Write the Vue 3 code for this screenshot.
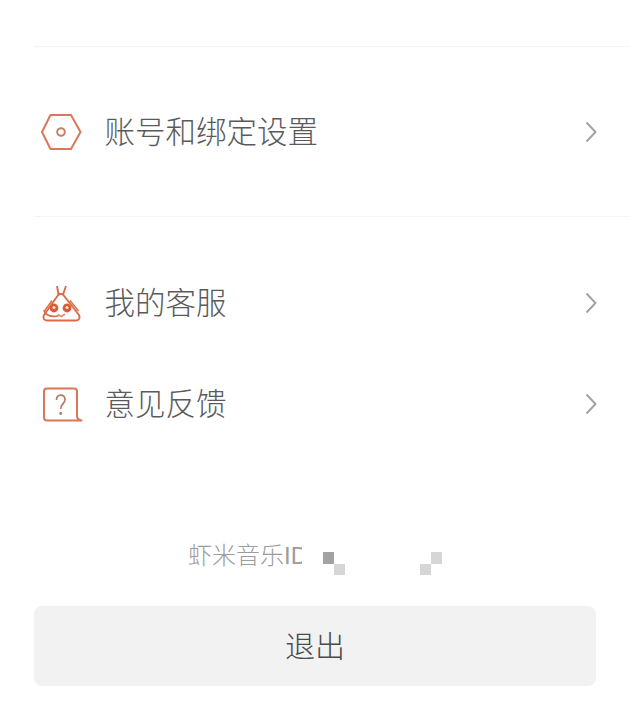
<script setup>
const accountRow = { label: '账号和绑定设置' }
const serviceRows = [
  { key: 'service', label: '我的客服' },
  { key: 'feedback', label: '意见反馈' },
]
</script>

<template>
  <div class="page">
    <div class="divider"></div>

    <section class="group group-account">
      <div class="row">
        <span class="icon">
          <svg width="44" height="38" viewBox="0 0 44 38" fill="none" stroke="#d9775a" stroke-width="2">
            <path d="M11.5 2H32L41.5 19L32 36H11.5L3 19Z" stroke-linejoin="round" />
            <circle cx="22" cy="19" r="3.8" stroke="#c4806a" />
          </svg>
        </span>
        <span class="label">{{ accountRow.label }}</span>
        <svg class="chev" width="12" height="22" viewBox="0 0 12 22" fill="none" stroke="#a0a0a0" stroke-width="1.9">
          <path d="M1.5 1.5L10.5 11L1.5 20.5" />
        </svg>
      </div>
    </section>

    <div class="divider"></div>

    <section class="group group-service">
      <div v-for="row in serviceRows" :key="row.key" class="row row-small">
        <span class="icon">
          <svg v-if="row.key === 'service'" width="44" height="38" viewBox="0 0 44 38" fill="none" stroke="#dd6a45" stroke-width="1.9">
            <path d="M18 2L19.5 10.5C20.5 10 23 10 24 10.5L27 2" stroke-linejoin="round" />
            <path d="M19.5 10.5L5 31C3.5 34 5 36.5 8 36.5H37C40 36.5 41.5 34 40 31L24 10.5" stroke-linejoin="round" />
            <path d="M13 16.5L5.5 27M31 16.5L39.5 27" stroke-width="1.4" />
            <circle cx="15" cy="24" r="4.4" fill="#dd5a35" stroke="none" />
            <circle cx="28" cy="24" r="4.4" fill="#dd5a35" stroke="none" />
            <circle cx="15" cy="23.5" r="1.5" fill="#fbe3da" stroke="none" />
            <circle cx="28" cy="23.5" r="1.5" fill="#fbe3da" stroke="none" />
            <path d="M5 26C6 31 12 34 20 31.5" stroke-width="1.7" />
            <path d="M19 30.5L22.5 32.5L26 30" stroke="#e58d80" stroke-width="1.8" />
          </svg>
          <svg v-else width="44" height="38" viewBox="0 0 44 38" fill="none" stroke="#d9775a" stroke-width="2">
            <path d="M8 3.5H35C37 3.5 38 4.5 38 6.5V31C38 33.5 39.5 35 42.5 35.5H8C6 35.5 5 34.5 5 32.5V6.5C5 4.5 6 3.5 8 3.5Z" stroke-linejoin="round" />
            <path d="M17.5 15C17.5 8.5 26 8.5 26 14.5C26 18.5 21.7 19 21.7 24" stroke="#b5796a" stroke-width="1.7" />
            <circle cx="21.7" cy="28.5" r="1.4" fill="#b5796a" stroke="none" />
          </svg>
        </span>
        <span class="label">{{ row.label }}</span>
        <svg class="chev" width="12" height="22" viewBox="0 0 12 22" fill="none" stroke="#a0a0a0" stroke-width="1.9">
          <path d="M1.5 1.5L10.5 11L1.5 20.5" />
        </svg>
      </div>
    </section>

    <div class="id-line">
      <span class="id-text">虾米音乐ID</span>
      <span class="mosaic">
        <i class="dark"></i><i></i>
        <i></i><i class="light"></i>
      </span>
      <span class="mosaic mosaic-end">
        <i></i><i class="light"></i>
        <i class="light"></i><i></i>
      </span>
    </div>

    <button class="logout"><span>退出</span></button>
  </div>
</template>

<style scoped>
.page {
  width: 630px;
  height: 726px;
  padding-top: 46px;
  box-sizing: border-box;
  background: #fff;
  font-family: "Liberation Sans", "Noto Sans CJK SC", sans-serif;
  overflow: hidden;
}
.divider {
  height: 1px;
  margin-left: 34px;
  background: #f5f4f4;
}
.group-account .row {
  height: 169px;
}
.group-service {
  padding-top: 35px;
}
.row {
  display: flex;
  align-items: center;
  padding: 0 33px 0 39px;
}
.row-small {
  height: 101px;
}
.icon {
  display: flex;
  align-items: center;
  width: 65.5px;
  flex: none;
}
.label {
  flex: 1;
  padding-bottom: 4px;
  font-size: 30.5px;
  font-weight: 300;
  color: #5a5a5a;
}
.chev {
  flex: none;
}
.id-line {
  display: flex;
  align-items: center;
  height: 46px;
  margin-top: 78px;
  padding-left: 188px;
}
.id-text {
  width: 114px;
  padding-bottom: 4px;
  overflow: hidden;
  white-space: nowrap;
  font-size: 24px;
  font-weight: 300;
  color: #9c9c9c;
}
.mosaic {
  display: grid;
  grid-template-columns: 11px 11px;
  grid-template-rows: 12px 11px;
  margin-top: 16px;
  margin-left: 21px;
}
.mosaic-end {
  margin-left: 75px;
}
.mosaic i {
  display: block;
}
.mosaic .dark {
  background: #a2a2a2;
}
.mosaic .light {
  background: #d6d6d6;
}
.logout {
  display: block;
  width: 562px;
  height: 80px;
  margin: 28px 0 0 34px;
  padding: 0 0 4px;
  border: none;
  border-radius: 8px;
  background: #f2f2f2;
  color: #4a4a4a;
  font-family: inherit;
  font-size: 30px;
  font-weight: 300;
}
</style>
